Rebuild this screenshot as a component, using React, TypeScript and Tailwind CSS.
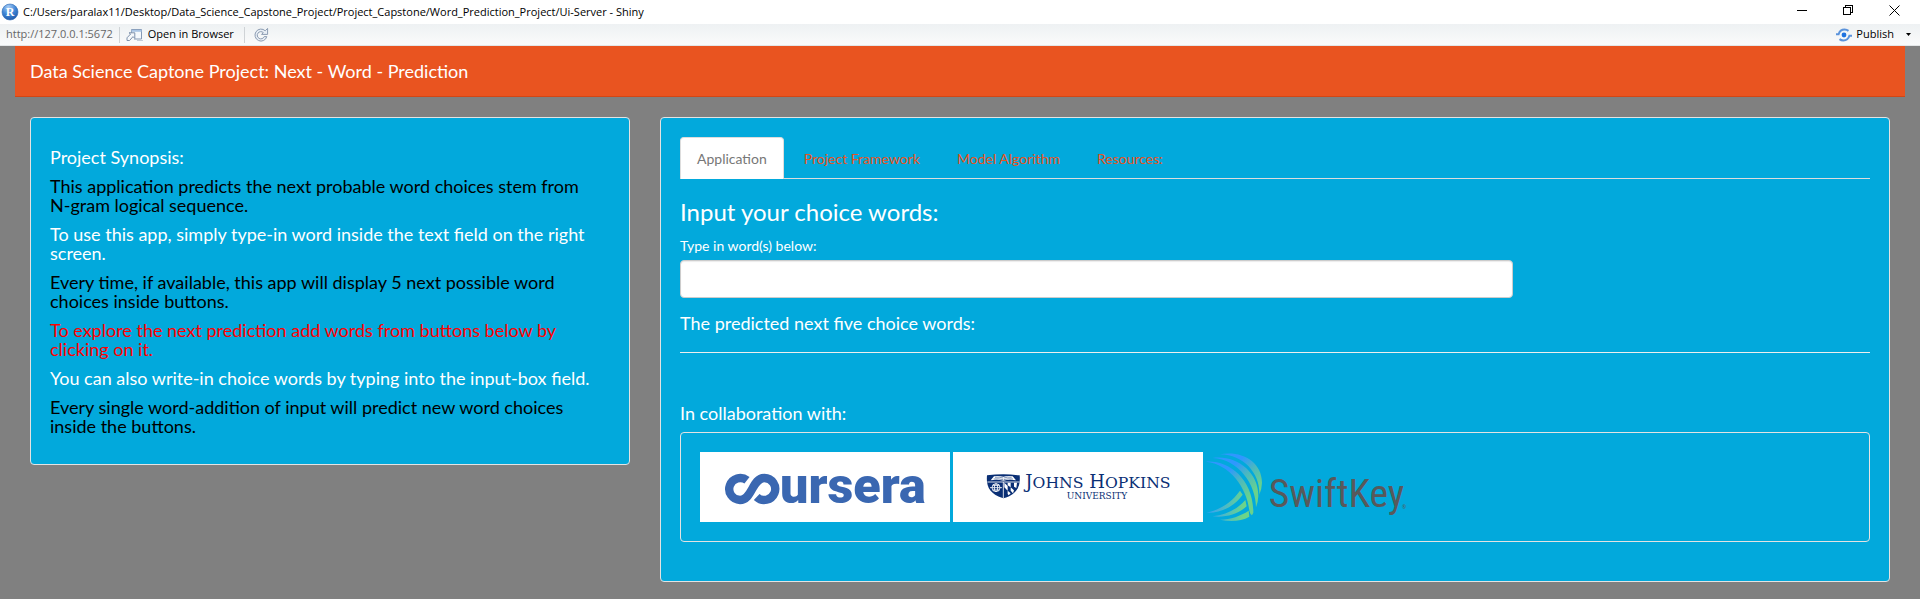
import { useState } from "react";

function AppIcon() {
  return (
    <svg width="18" height="18" viewBox="0 0 18 18" aria-hidden="true">
      <defs>
        <radialGradient id="orb" cx="0.4" cy="0.2" r="0.9">
          <stop offset="0" stopColor="#a9cdf5" />
          <stop offset="0.5" stopColor="#3f86d6" />
          <stop offset="1" stopColor="#1a4f9e" />
        </radialGradient>
      </defs>
      <circle cx="9" cy="9" r="8" fill="url(#orb)" stroke="#2f6cb5" strokeWidth="0.6" />
      <text x="9" y="13" textAnchor="middle" fontFamily="Liberation Serif, serif" fontWeight="700" fontSize="12" fill="#fff">
        R
      </text>
    </svg>
  );
}

function PopoutIcon() {
  return (
    <svg width="18" height="14" viewBox="0 0 18 14" fill="none" aria-hidden="true">
      <path d="M5.5 8V1.5h10v9.5H8" fill="#f4f8fc" stroke="#8499b5" />
      <path d="M5.5 2.8h10" stroke="#a9c4e4" strokeWidth="2" />
      <path d="M11 12.5h6" stroke="#c3ccd8" />
      <path d="M1 12.5V9.8L4.6 6 3 4.8h5.8v5.6L7 8.6l-3.4 3.9z" fill="#f5f8fb" stroke="#7d90ab" strokeLinejoin="round" />
    </svg>
  );
}

function RefreshIcon() {
  return (
    <svg width="16" height="16" viewBox="0 0 16 16" fill="none" aria-hidden="true">
      <path
        d="M12.2 3.8A6 6 0 1 0 13.8 9.6h-2.6a3.6 3.6 0 1 1-.9-4L8.6 7.4h6V1.4z"
        fill="#e9eff6"
        stroke="#8c9cb2"
        strokeLinejoin="round"
      />
    </svg>
  );
}

function PublishIcon() {
  return (
    <svg width="16" height="14" viewBox="0 0 16 14" fill="none" aria-hidden="true">
      <circle cx="8" cy="7" r="2.4" fill="#1f73e0" />
      <path d="M0 6.3h2.6C3.6 3 6 1.6 8.6 1.6c1.7 0 2.9.5 3.9 1.3" stroke="#5b93db" strokeWidth="2" />
      <path d="M16 7.7h-2.6C12.4 11 10 12.4 7.4 12.4c-1.7 0-2.9-.5-3.9-1.3" stroke="#5b93db" strokeWidth="2" />
    </svg>
  );
}

function CourseraLogo() {
  return (
    <svg width="250" height="70" viewBox="150 186 750 210" role="img" aria-label="coursera" className="bg-white">
      <path
        d="M291 271A33 33 0 1 0 270 330C307 330 306 264 343 264A33 33 0 1 1 320 321"
        fill="none"
        stroke="#3a67b1"
        strokeWidth="25"
      />
      <text x="390" y="338" fontFamily="Roboto, sans-serif" fontWeight="900" fontSize="151" fill="#3a67b1">
        ursera
      </text>
    </svg>
  );
}

function HopkinsLogo() {
  return (
    <svg width="250" height="70" viewBox="39 66 750 210" role="img" aria-label="Johns Hopkins University" className="bg-white">
      <path d="M141 136Q190 130 239 136C242 168 232 192 190 205C148 192 138 168 141 136Z" fill="#0a2f75" />
      <path d="M152 151L162 139Q176 136 190 140Q204 136 218 139L228 151Q208 147 190 152Q172 147 152 151Z" fill="#fff" />
      <path d="M165 142q13-2 24 2M215 142q-13-2-24 2M161 147q15-2 28 2M219 147q-15-2-28 2" stroke="#0a2f75" strokeWidth="1.5" fill="none" />
      <path d="M142 156H239M190 156V204" stroke="#fff" strokeWidth="2.5" />
      <g fill="none" stroke="#fff" strokeWidth="2.5">
        <circle cx="168" cy="173" r="12" />
        <ellipse cx="168" cy="173" rx="5" ry="12" />
        <path d="M150 173h36M158 166h20M158 180h20" />
      </g>
      <path
        d="M193 158l10 10v14l-10-10zM203 158h9v14l-9-6zM212 172l10 9-3 9-7-8zM222 158h9l-2 16-7-4zM203 182l9 8-6 6-3-4z"
        fill="#fff"
      />
      <g fontFamily="DejaVu Serif, serif" fill="#0a2f75">
        <text x="256" y="173" fontSize="54">
          J<tspan fontSize="47">OHNS</tspan> H<tspan fontSize="47">OPKINS</tspan>
        </text>
        <text x="471" y="206" fontSize="27" textAnchor="middle">
          UNIVERSITY
        </text>
      </g>
    </svg>
  );
}

function SwiftKeyLogo() {
  return (
    <svg width="200" height="70" viewBox="48 36 600 210" role="img" aria-label="SwiftKey">
      <defs>
        <linearGradient id="wing" gradientUnits="userSpaceOnUse" x1="110" y1="50" x2="200" y2="150">
          <stop offset="0.25" stopColor="#2f97ff" />
          <stop offset="0.6" stopColor="#4db9bd" />
          <stop offset="1" stopColor="#69d28c" />
        </linearGradient>
        <linearGradient id="tail" gradientUnits="userSpaceOnUse" x1="60" y1="205" x2="160" y2="215">
          <stop offset="0" stopColor="#3aa3f0" />
          <stop offset="0.5" stopColor="#4fbcc0" />
          <stop offset="1" stopColor="#6cd489" />
        </linearGradient>
      </defs>
      <g fill="url(#wing)">
        <path d="M90 43C150 30 216 62 216 128Q215 150 208 164C211 104 164 44 90 43Z" />
        <path d="M68 54C134 44 206 92 205 168Q204 188 198 202C198 134 146 58 68 54Z" />
        <path d="M48 65C116 60 190 116 190 218L186 226Q180 222 178 212C172 146 120 72 48 65Z" />
      </g>
      <g fill="url(#tail)">
        <path d="M150 152L158 164C132 200 92 220 50 218C92 208 124 188 150 152Z" />
        <path d="M166 180L170 199C144 222 106 234 68 229C108 224 142 208 166 180Z" />
        <path d="M176 212L178 230C154 244 120 246 90 239C122 238 152 228 176 212Z" />
      </g>
      <text x="236" y="202" fontFamily="Roboto Condensed, Roboto, sans-serif" fontSize="119" fill="#58595b">
        SwiftKey
      </text>
      <text x="636" y="208" fontFamily="Open Sans, sans-serif" fontSize="15" fill="#58595b">
        ®
      </text>
    </svg>
  );
}

function TitleBar() {
  return (
    <header className="flex h-6 items-center bg-white pl-px text-[11px] text-black">
      <AppIcon />
      <h1 className="ml-1 flex-1">
        C:/Users/paralax11/Desktop/Data_Science_Capstone_Project/Project_Capstone/Word_Prediction_Project/Ui-Server - Shiny
      </h1>
      <div className="flex items-center gap-[35px] pr-5 pb-1">
        <button aria-label="Minimize">
          <svg width="11" height="11" viewBox="0 0 11 11" shapeRendering="crispEdges">
            <path d="M0 5.5h10" stroke="#000" />
          </svg>
        </button>
        <button aria-label="Restore">
          <svg width="11" height="11" viewBox="0 0 11 11" fill="none" stroke="#000" shapeRendering="crispEdges">
            <path d="M.5 2.5h7v7h-7zM2.5 2.5v-2h7v7h-2" />
          </svg>
        </button>
        <button aria-label="Close">
          <svg width="11" height="11" viewBox="0 0 11 11" fill="none" stroke="#000">
            <path d="M.5.5l10 10M10.5.5l-10 10" />
          </svg>
        </button>
      </div>
    </header>
  );
}

function Toolbar() {
  return (
    <div className="flex h-[22px] items-center border-b border-[#e3e6e8] bg-linear-to-b from-[#eef1f3] to-[#fafbfb] pl-1.5 text-[11px] text-black">
      <span className="text-[#666]">http://127.0.0.1:5672</span>
      <span className="ml-1.5 h-4 w-px bg-[#cfd3d6]" />
      <button className="ml-1.5 flex items-center gap-1">
        <PopoutIcon />
        Open in Browser
      </button>
      <span className="ml-2.5 h-4 w-px bg-[#cfd3d6]" />
      <button className="ml-2" aria-label="Reload">
        <RefreshIcon />
      </button>
      <button className="ml-auto flex items-center gap-1">
        <PublishIcon />
        Publish
      </button>
      <button className="mr-[9px] ml-3" aria-label="Publish options">
        <svg width="5" height="3" viewBox="0 0 5 3">
          <path d="M0 0h5L2.5 3z" fill="#000" />
        </svg>
      </button>
    </div>
  );
}

const synopsis = [
  { text: "Project Synopsis:", color: "text-white" },
  { text: "This application predicts the next probable word choices stem from N-gram logical sequence.", color: "text-black" },
  { text: "To use this app, simply type-in word inside the text field on the right screen.", color: "text-white" },
  { text: "Every time, if available, this app will display 5 next possible word choices inside buttons.", color: "text-black" },
  { text: "To explore the next prediction add words from buttons below by clicking on it.", color: "text-[#ff0000]" },
  { text: "You can also write-in choice words by typing into the input-box field.", color: "text-white" },
  { text: "Every single word-addition of input will predict new word choices inside the buttons.", color: "text-black" },
];

const tabs = ["Application", "Project Framework", "Model Algorithm", "Resources:"];

export default function App() {
  const [active, setActive] = useState("Application");
  const [words, setWords] = useState("");

  return (
    <div className="min-h-screen bg-white pr-0.5 font-['Open_Sans',sans-serif]">
      <div className="flex min-h-screen flex-col bg-[#808080]">
        <TitleBar />
        <Toolbar />
        <main className="px-[15px] font-[Lato,sans-serif] text-sm text-white">
          <nav className="flex h-[51px] items-center border-b border-[#d34615] bg-[#e95420] px-[15px] text-lg">
            Data Science Captone Project: Next - Word - Prediction
          </nav>
          <div className="mt-5 grid grid-cols-3 items-start">
            <div className="px-[15px]">
              <aside className="flex flex-col gap-2.5 rounded-sm border border-[#e3e3e3] bg-[#02a9dc] pt-[30px] pr-7 pb-7 pl-[19px] text-lg leading-[19px]">
                {synopsis.map((item) => (
                  <h4 key={item.text} className={item.color}>
                    {item.text}
                  </h4>
                ))}
              </aside>
            </div>
            <div className="col-span-2 px-[15px]">
              <section className="rounded-sm border border-[#e3e3e3] bg-[#02a9dc] p-[19px]">
                <div role="tablist" className="flex gap-[3px] border-b border-[#ddd]">
                  {tabs.map((tab) => (
                    <button
                      key={tab}
                      role="tab"
                      aria-selected={tab === active}
                      onClick={() => setActive(tab)}
                      className={
                        tab === active
                          ? "-mb-px h-[42px] rounded-t-sm border border-b-0 border-[#ddd] bg-white px-4 text-[#777]"
                          : "-mb-px h-[42px] border border-b-0 border-transparent px-4 text-[#e95420]"
                      }
                    >
                      {tab}
                    </button>
                  ))}
                </div>
                <h3 className="mt-5 text-2xl leading-[26px]">Input your choice words:</h3>
                <label htmlFor="words" className="mt-[11px] block leading-5">
                  Type in word(s) below:
                </label>
                <input
                  id="words"
                  type="text"
                  value={words}
                  onChange={(e) => setWords(e.target.value)}
                  className="mt-1 block h-[38px] w-7/10 rounded-sm border border-[#ccc] bg-white px-3 text-[#333] shadow-[inset_0_1px_1px_rgba(0,0,0,0.08)]"
                />
                <h4 className="mt-4 text-lg leading-[19px]">The predicted next five choice words:</h4>
                <hr className="mt-[19px] border-[#eee]" />
                <h4 className="mt-[51px] text-lg leading-[19px]">In collaboration with:</h4>
                <div className="mt-[9px] mb-5 flex flex-wrap gap-[3px] rounded-sm border border-[#e3e3e3] p-[19px]">
                  <CourseraLogo />
                  <HopkinsLogo />
                  <SwiftKeyLogo />
                </div>
              </section>
            </div>
          </div>
        </main>
      </div>
    </div>
  );
}
